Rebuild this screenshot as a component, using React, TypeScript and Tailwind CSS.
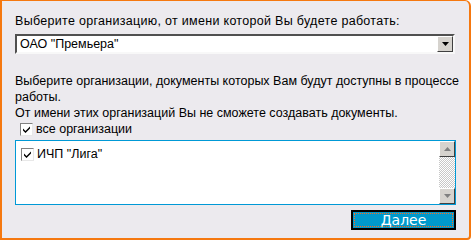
import React from 'react'

function Check() {
  return (
    <span className="box-border flex h-[13px] w-[13px] shrink-0 items-center justify-center border border-t-[#808080] border-l-[#808080] border-r-[#e8e8e8] border-b-[#e8e8e8] bg-white">
      <svg width="9" height="9" viewBox="0 0 9 9">
        <path d="M1 3.5 L3.5 6 L8 1.5 L8 3.5 L3.5 8 L1 5.5 Z" fill="#000" />
      </svg>
    </span>
  )
}

function Arrow({ up, color }: { up?: boolean; color: string }) {
  return (
    <svg width="7" height="4" viewBox="0 0 7 4">
      <path d={up ? 'M3.5 0 L7 4 L0 4 Z' : 'M0 0 L7 0 L3.5 4 Z'} fill={color} />
    </svg>
  )
}

function ScrollBtn({ up }: { up?: boolean }) {
  return (
    <div className="box-border flex h-[16px] w-[16px] items-center justify-center border border-t-white border-l-white border-r-[#404040] border-b-[#404040] bg-[#d6d3ce]">
      <Arrow up={up} color="#808080" />
    </div>
  )
}

export default function App() {
  return (
    <div className="h-[241px] w-[471px] bg-white font-['Liberation_Sans',Arial,sans-serif] text-[12.5px] text-black">
      <div className="box-border h-[240px] w-[471px] rounded-tr-[6px] rounded-br-[4px] border-2 border-t-[1px] border-[#f5780f] bg-[#eceaee] px-[13px] pt-[12px]">
        <p className="whitespace-nowrap leading-[16px] tracking-[0.3px]">Выберите организацию, от имени которой Вы будете работать:</p>

        <div className="mt-[5px] box-border flex h-[20px] w-[440px] items-center border-2 border-t-[#505050] border-l-[#505050] border-r-[#f8f8f8] border-b-[#f8f8f8] bg-white">
          <span className="flex-1 pl-[3px] leading-[16px]">ОАО "Премьера"</span>
          <div className="box-border flex h-[16px] w-[16px] items-center justify-center border border-t-white border-l-white border-r-[#404040] border-b-[#404040] bg-[#d6d3ce]">
            <Arrow color="#000" />
          </div>
        </div>

        <p className="mt-[19px] whitespace-nowrap leading-[16px]">
          Выберите организации, документы которых Вам будут доступны в процессе
          <br />
          работы.
          <br />
          От имени этих организаций Вы не сможете создавать документы.
        </p>

        <label className="flex h-[16px] items-center gap-[3px] pl-[5px]">
          <Check />
          <span>все организации</span>
        </label>

        <div className="mt-[3px] box-border flex h-[65px] w-[441px] border border-[#0099d6] bg-white">
          <div className="flex-1 pl-[5px] pt-[6px]">
            <label className="flex h-[14px] items-center gap-[3px]">
              <Check />
              <span>ИЧП "Лига"</span>
            </label>
          </div>
          <div className="flex w-[16px] flex-col bg-[image:repeating-conic-gradient(#c8c8c8_0%_25%,#ffffff_0%_50%)] bg-[length:2px_2px]">
            <ScrollBtn up />
            <div className="flex-1" />
            <ScrollBtn />
          </div>
        </div>

        <div className="mt-[5px] flex justify-end">
          <button className="box-border h-[20px] w-[105px] border-2 border-black bg-[#0099cc] p-[1px] text-white">
            <span className="flex h-full w-full items-center justify-center border border-dotted border-[#ff6a1a] font-['DejaVu_Sans',sans-serif] text-[14px] leading-none">
              Далее
            </span>
          </button>
        </div>
      </div>
    </div>
  )
}
